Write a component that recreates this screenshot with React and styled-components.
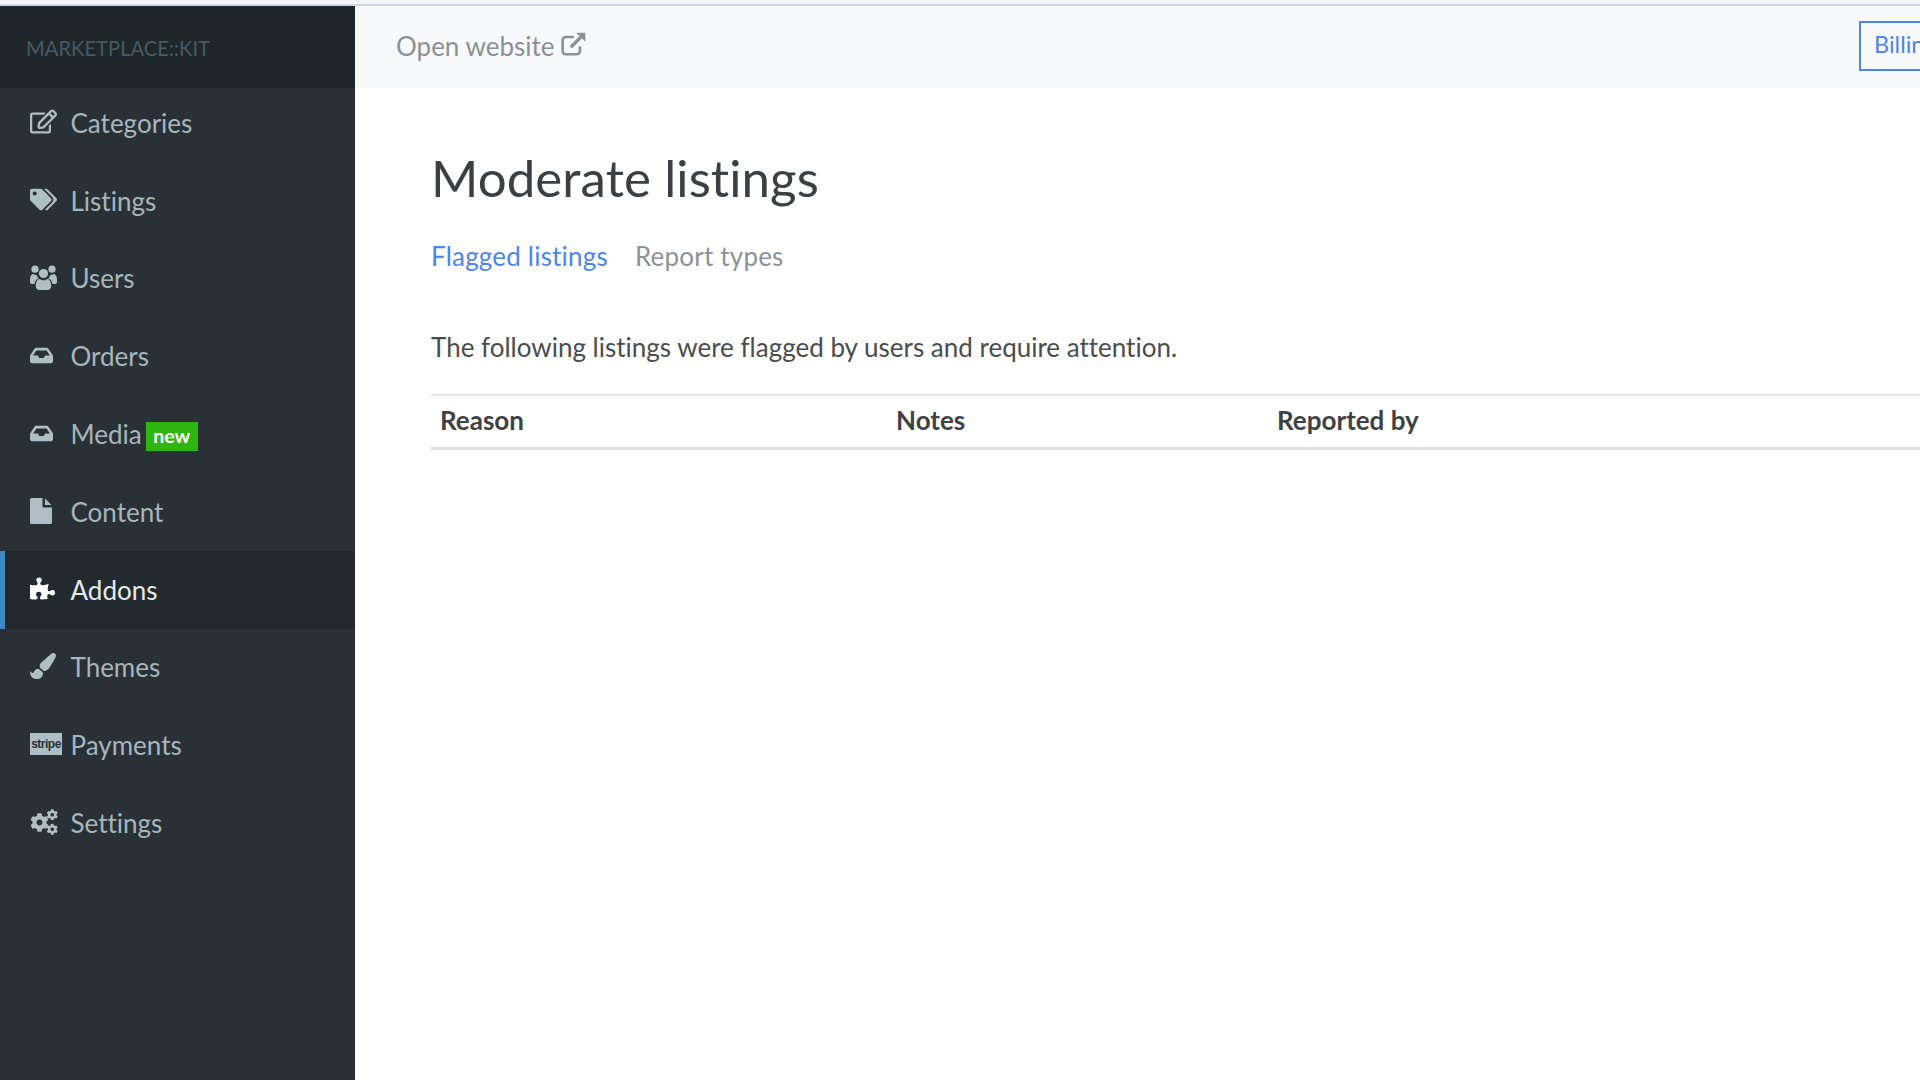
import React from "react";
import styled, { createGlobalStyle } from "styled-components";
import { FaRegEdit, FaTags, FaInbox, FaPuzzlePiece, FaPaintBrush, FaCog } from "react-icons/fa";

const Global = createGlobalStyle`
  html, body { margin: 0; padding: 0; height: 100%; overflow: hidden; background: #fff; }
  body { font-family: "Lato", "Noto Sans", sans-serif; font-variant-ligatures: none; }
  * { box-sizing: border-box; }
`;

const Shell = styled.div`
  width: 1920px; height: 1080px; display: flex; flex-direction: column; overflow: hidden;
`;
const TopStrip = styled.div`
  height: 6px; flex: none; background: #f3f4f6; border-bottom: 2px solid #d3d5e6;
`;
const Body = styled.div`
  flex: 1; display: flex; min-height: 0;
`;
const Sidebar = styled.aside`
  width: 355px; flex: none; background: #293137; display: flex; flex-direction: column;
`;
const Brand = styled.div`
  height: 82px; flex: none; background: #20272a; color: #455a64; display: flex; align-items: center;
  padding-left: 26px; font-size: 20.2px; position: relative; z-index: 1; padding-top: 2px;
`;
const Nav = styled.nav`
  display: flex; flex-direction: column; margin-top: -4px;
`;
const NavItem = styled.a`
  height: 77.8px; display: flex; align-items: center; padding-left: ${p => (p.$active ? "25px" : "30px")};
  border-left: ${p => (p.$active ? "5px solid #3e8ac4" : "0")};
  background: ${p => (p.$active ? "#232a2f" : "transparent")};
  color: ${p => (p.$active ? "#e4e9eb" : "#a7b5bc")}; font-size: 26px;
`;
const IconSlot = styled.span`
  width: 40.5px; height: 28px; flex: none; display: flex; align-items: center; font-size: ${p => p.$size || 27}px;
  color: ${p => (p.$active ? "#fff" : "#b0bec5")};
  position: relative; top: -1px;
`;
const Label = styled.span`
  white-space: nowrap;
`;
const NewBadge = styled.span`
  margin-left: 4px; width: 52px; height: 29px; background: #2fb50f; color: #fff; font-size: 19.5px; font-weight: 700;
  display: flex; align-items: center; justify-content: center; position: relative; top: 2px; padding-bottom: 2px;
`;
const StripeMark = styled.span`
  width: 32px; height: 22px; background: #b0bec5; color: #283138; font-size: 12px; font-weight: 700;
  display: flex; align-items: center; justify-content: center; letter-spacing: -0.5px; font-family: "Liberation Sans", sans-serif;
`;
const Main = styled.main`
  flex: 1; display: flex; flex-direction: column; min-width: 0;
`;
const Header = styled.header`
  height: 82px; flex: none; background: #f8f9fa; display: flex; align-items: center; justify-content: space-between;
  padding-left: 41px; padding-bottom: 4px; overflow: hidden;
`;
const SiteLink = styled.a`
  color: #8b9196; font-size: 26px; display: flex; align-items: center; gap: 6px; position: relative; top: 1px;
`;
const OutIcon = styled.svg`
  width: 26px; height: 26px; flex: none; position: relative; top: -2px;
`;
const BillingButton = styled.button`
  height: 50px; width: 120px; flex: none; margin-right: -59px; background: transparent; border: 2px solid #4d85ea; color: #4d85ea;
  font: inherit; font-size: 23.5px; padding: 0 13px 4px; text-align: left; position: relative; top: 1px; white-space: nowrap;
`;
const Content = styled.div`
  padding: 59px 0 0 76px; display: flex; flex-direction: column;
`;
const Title = styled.h1`
  margin: 0; font-size: 51px; line-height: 62px; font-weight: 400; color: #3c4043; letter-spacing: 0.1px;
`;
const Tabs = styled.div`
  display: flex; gap: 27px; margin-top: 31px; font-size: 26px; line-height: 32px; letter-spacing: 0.2px;
`;
const Tab = styled.a`
  color: ${p => (p.$active ? "#4d85ea" : "#8d9296")};
`;
const Intro = styled.p`
  margin: 59px 0 0; font-size: 26px; line-height: 32px; color: #4a4d50;
`;
const Table = styled.div`
  margin-top: 30.5px; border-top: 2px solid #e4e7ea; border-bottom: 3px solid #dcdfe8; height: 56px;
  display: grid; grid-template-columns: 456px 381px 1fr; align-items: center; padding: 0 0 3px 9px;
`;
const Th = styled.div`
  font-size: 26px; font-weight: 700; color: #3f4245;
`;

const ExternalIcon = () => (
  <OutIcon viewBox="0 0 24 24" fill="none" stroke="#8b9196" strokeWidth="2.4">
    <path d="M17.5 14v4.5a3 3 0 0 1-3 3H4.5a3 3 0 0 1-3-3V8.5a3 3 0 0 1 3-3H12" />
    <path d="M9 15L21 3" strokeWidth="3" />
    <path d="M14 1.5h8.5V10z" fill="#8b9196" stroke="none" />
  </OutIcon>
);

const UsersIcon = () => (
  <svg width="27" height="25" viewBox="0 0 27 25" fill="currentColor">
    <circle cx="13.5" cy="8.5" r="4.6" />
    <circle cx="5" cy="4.2" r="3.6" />
    <circle cx="22" cy="4.2" r="3.6" />
    <path d="M0 14.5C0 11 1.5 9 3.5 9c1 .8 2 1.2 3.4 1.2.3 1.3.9 2.4 1.9 3.3-2.3.7-3.8 2.4-4.3 5.5H2c-1.2 0-2-.9-2-2z" />
    <path d="M27 14.5C27 11 25.5 9 23.5 9c-1 .8-2 1.2-3.4 1.2-.3 1.3-.9 2.4-1.9 3.3 2.3.7 3.8 2.4 4.3 5.5H25c1.2 0 2-.9 2-2z" />
    <path d="M5.8 21c0-4 1.5-7 4-7 1 .9 2.2 1.3 3.7 1.3s2.7-.4 3.7-1.3c2.5 0 4 3 4 7 0 2.5-1.5 4-3.7 4H9.5c-2.2 0-3.7-1.5-3.7-4z" />
  </svg>
);

const FileIcon = () => (
  <svg width="22" height="26" viewBox="0 0 22 26" fill="currentColor">
    <path d="M1.5 0H12.5V8a1.5 1.5 0 0 0 1.5 1.5h8V24.5a1.5 1.5 0 0 1-1.5 1.5h-19A1.5 1.5 0 0 1 0 24.5V1.5A1.5 1.5 0 0 1 1.5 0z" />
    <path d="M15 0.5l6.5 6.5H15z" />
  </svg>
);

const CogsIcon = () => (
  <svg width="28" height="26" viewBox="0 0 28 26" fill="currentColor">
    <FaCog x="0" y="4" size="19" />
    <FaCog x="16.5" y="0" size="11.5" />
    <FaCog x="16.5" y="14.5" size="11.5" />
  </svg>
);

const items = [
  { label: "Categories", icon: <FaRegEdit />, size: 27 },
  { label: "Listings", icon: <FaTags />, size: 27 },
  { label: "Users", icon: <UsersIcon /> },
  { label: "Orders", icon: <FaInbox />, size: 23 },
  { label: "Media", icon: <FaInbox />, size: 23, badge: "new" },
  { label: "Content", icon: <FileIcon /> },
  { label: "Addons", icon: <FaPuzzlePiece />, size: 25, active: true },
  { label: "Themes", icon: <FaPaintBrush />, size: 26 },
  { label: "Payments", icon: <StripeMark>stripe</StripeMark> },
  { label: "Settings", icon: <CogsIcon /> },
];

export default function App() {
  return (
    <Shell>
      <Global />
      <TopStrip />
      <Body>
        <Sidebar>
          <Brand>MARKETPLACE::KIT</Brand>
          <Nav>
            {items.map(it => (
              <NavItem key={it.label} $active={it.active}>
                <IconSlot $active={it.active} $size={it.size}>{it.icon}</IconSlot>
                <Label>{it.label}</Label>
                {it.badge && <NewBadge>{it.badge}</NewBadge>}
              </NavItem>
            ))}
          </Nav>
        </Sidebar>
        <Main>
          <Header>
            <SiteLink>Open website <ExternalIcon /></SiteLink>
            <BillingButton>Billing</BillingButton>
          </Header>
          <Content>
            <Title>Moderate listings</Title>
            <Tabs>
              <Tab $active>Flagged listings</Tab>
              <Tab>Report types</Tab>
            </Tabs>
            <Intro>The following listings were flagged by users and require attention.</Intro>
            <Table>
              <Th>Reason</Th>
              <Th>Notes</Th>
              <Th>Reported by</Th>
            </Table>
          </Content>
        </Main>
      </Body>
    </Shell>
  );
}
